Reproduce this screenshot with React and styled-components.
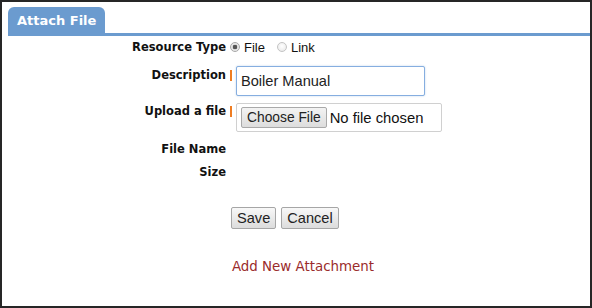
import React from "react";
import styled, { createGlobalStyle } from "styled-components";

const GlobalStyle = createGlobalStyle`
  html, body {
    margin: 0;
    padding: 0;
    background: #ffffff;
  }
  * { box-sizing: border-box; }
`;

export default function App() {
  return (
    <>
      <GlobalStyle />
      <Frame>
        <TabBar>
          <Tab>Attach File</Tab>
        </TabBar>

        <Row $top={3}>
          <Label>Resource Type</Label>
          <Choices>
            <RadioOption>
              <Radio type="radio" name="rtype" defaultChecked />
              File
            </RadioOption>
            <RadioOption>
              <Radio type="radio" name="rtype" />
              Link
            </RadioOption>
          </Choices>
        </Row>

        <Row $top={12}>
          <Label>Description</Label>
          <Field>
            <Required />
            <TextInput defaultValue="Boiler Manual" />
          </Field>
        </Row>

        <Row $top={7}>
          <Label>Upload a file</Label>
          <Field>
            <Required />
            <FileBox>
              <FileButton type="button">Choose File</FileButton>
              <FileStatus>No file chosen</FileStatus>
            </FileBox>
          </Field>
        </Row>

        <Row $top={9}>
          <Label>File Name</Label>
          <span />
        </Row>

        <Row $top={7}>
          <Label>Size</Label>
          <span />
        </Row>

        <Actions>
          <Button type="button">Save</Button>
          <Button type="button">Cancel</Button>
        </Actions>

        <LinkRow>
          <AddLink href="#">Add New Attachment</AddLink>
        </LinkRow>
      </Frame>
    </>
  );
}

const Frame = styled.div`
  width: 592px;
  height: 308px;
  border: 2px solid #262626;
  padding: 5px 0 0 6px;
  background: #fff;
  font-family: "DejaVu Sans", Verdana, sans-serif;
  color: #111;
`;

const TabBar = styled.div`
  display: flex;
  border-bottom: 3px solid #6b9bcf;
`;

const Tab = styled.div`
  height: 26px;
  padding: 0 9px;
  display: flex;
  align-items: center;
  background: #6b9bcf;
  border-radius: 6px 6px 0 0;
  color: #fff;
  font-weight: bold;
  font-size: 13px;
`;

const Row = styled.div`
  display: grid;
  grid-template-columns: 218px 1fr;
  column-gap: 4px;
  margin-top: ${(p) => p.$top}px;
  align-items: start;
`;

const Label = styled.div`
  text-align: right;
  font-weight: bold;
  font-size: 11.5px;
  line-height: 16px;
`;

const Choices = styled.div`
  display: flex;
  align-items: center;
  height: 16px;
  font-family: "Liberation Sans", Arial, sans-serif;
  font-size: 13px;
`;

const RadioOption = styled.label`
  display: flex;
  align-items: center;
  margin-right: 12px;
`;

const Radio = styled.input`
  appearance: none;
  width: 10px;
  height: 10px;
  margin: 0 4px 0 0;
  border-radius: 50%;
  border: 1px solid #c4c4c4;
  background: radial-gradient(circle at 50% 40%, #ffffff, #e6e6e6);
  &:checked {
    border-color: #a8a8a8;
    background: radial-gradient(circle, #555 0, #555 2px, #e2e2e2 2.6px, #f4f4f4 100%);
  }
`;

const Field = styled.div`
  display: flex;
  align-items: flex-start;
`;

const Required = styled.span`
  width: 2px;
  height: 11px;
  margin: 3px 4px 0 0;
  background: #ef7d22;
`;

const TextInput = styled.input`
  width: 189px;
  height: 30px;
  margin-top: -1px;
  padding: 0 4px;
  border: 1px solid #86aee0;
  border-radius: 2px;
  box-shadow: 0 0 2px rgba(102, 153, 204, 0.45);
  font-family: "Liberation Sans", Arial, sans-serif;
  font-size: 14.6px;
  color: #222;
  outline: none;
`;

const FileBox = styled.div`
  width: 206px;
  height: 29px;
  display: flex;
  align-items: center;
  padding-left: 4px;
  border: 1px solid #d0d0d0;
  border-radius: 2px;
  font-family: "Liberation Sans", Arial, sans-serif;
`;

const FileButton = styled.button`
  height: 21px;
  padding: 0 5px;
  border: 1px solid #a9a9a9;
  border-radius: 2px;
  background: linear-gradient(#f3f3f3, #dddddd);
  font-family: "Liberation Sans", Arial, sans-serif;
  font-size: 13.8px;
  color: #222;
`;

const FileStatus = styled.span`
  margin-left: 3px;
  font-size: 14.8px;
  color: #111;
`;

const Actions = styled.div`
  display: flex;
  gap: 5px;
  margin: 27px 0 0 223px;
`;

const Button = styled.button`
  height: 22px;
  padding: 0 5px;
  border: 1px solid #a6a6a6;
  border-radius: 2px;
  background: linear-gradient(#f8f8f8, #dcdcdc);
  font-family: "Liberation Sans", Arial, sans-serif;
  font-size: 14.6px;
  color: #222;
`;

const LinkRow = styled.div`
  margin-top: 27px;
  padding-left: 8px;
  text-align: center;
`;

const AddLink = styled.a`
  font-size: 13.4px;
  line-height: 16px;
  color: #9a2b2b;
  text-decoration: none;
`;
